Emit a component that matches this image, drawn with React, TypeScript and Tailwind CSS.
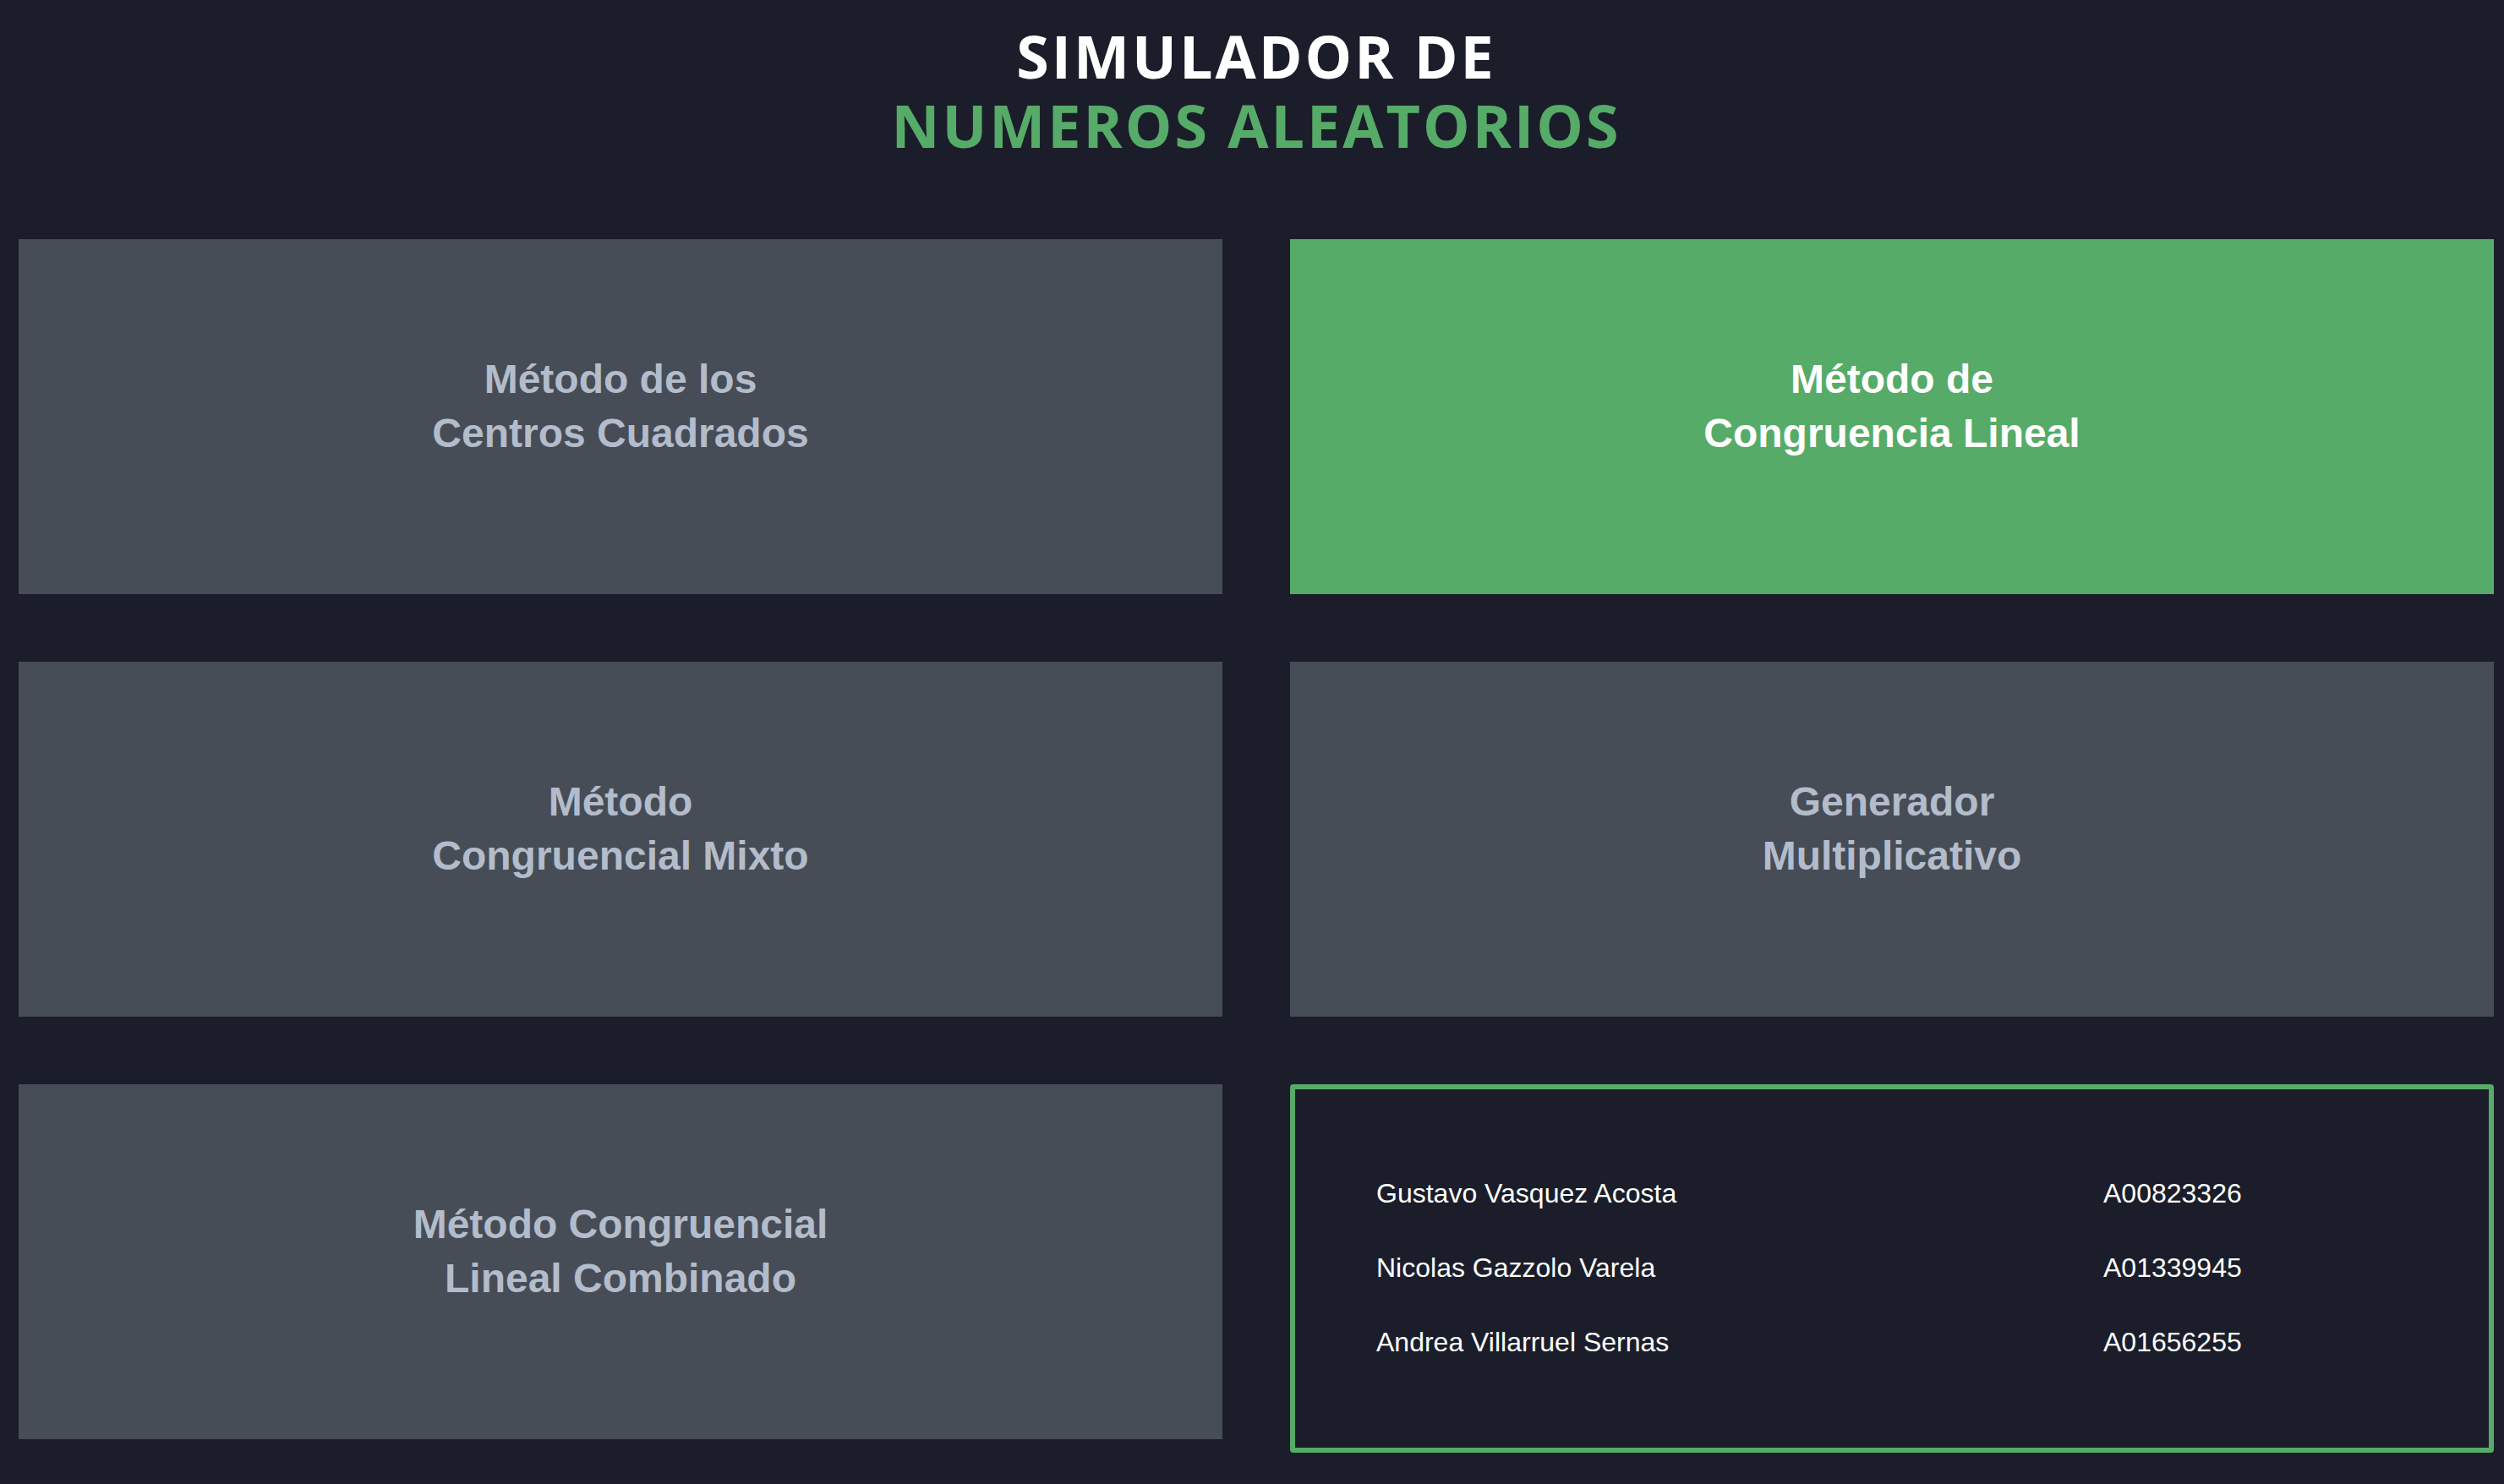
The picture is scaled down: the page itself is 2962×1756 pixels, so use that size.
import React from "react";

const cards = [
  { l1: "Método de los", l2: "Centros Cuadrados", active: false },
  { l1: "Método de", l2: "Congruencia Lineal", active: true },
  { l1: "Método", l2: "Congruencial Mixto", active: false },
  { l1: "Generador", l2: "Multiplicativo", active: false },
  { l1: "Método Congruencial", l2: "Lineal Combinado", active: false },
];

const team = [
  ["Gustavo Vasquez Acosta", "A00823326"],
  ["Nicolas Gazzolo Varela", "A01339945"],
  ["Andrea Villarruel Sernas", "A01656255"],
];

function Card({ l1, l2, active }: { l1: string; l2: string; active: boolean }) {
  return (
    <div
      className={
        active
          ? "h-[420px] self-start flex items-center justify-center pb-[24px] bg-[#56ab68] text-white"
          : "h-[420px] self-start flex items-center justify-center pb-[24px] bg-[#474d56] text-[#b3bccb]"
      }
    >
      <div className="text-center font-['Liberation_Sans',Arial,sans-serif] font-bold text-[48px] leading-[64px]">
        <div>{l1}</div>
        <div>{l2}</div>
      </div>
    </div>
  );
}

export default function App() {
  return (
    <div className="min-h-screen bg-[#1b1e2a] pl-[22px] pr-[12px] pb-[37px]">
      <header className="pt-[25px] text-center font-['Open_Sans',sans-serif] font-bold text-[70px] leading-[82px] tracking-[3px]">
        <div className="text-white">SIMULADOR DE</div>
        <div className="text-[#56ab68]">NUMEROS ALEATORIOS</div>
      </header>
      <div className="mt-[94px] grid grid-cols-2 gap-x-[80px] gap-y-[80px]">
        {cards.map((c, i) => (
          <Card key={i} {...c} />
        ))}
        <div className="h-[436px] self-start rounded-[4px] border-[6px] border-[#56ab68] bg-[#1b1e2a] flex flex-col justify-center gap-[48px] pl-[96px] pb-[3px] font-['Liberation_Sans',Arial,sans-serif] text-[32px] leading-[40px] text-white">
          {team.map(([n, id]) => (
            <div key={id} className="grid grid-cols-[860px_auto]">
              <span>{n}</span>
              <span>{id}</span>
            </div>
          ))}
        </div>
      </div>
    </div>
  );
}
